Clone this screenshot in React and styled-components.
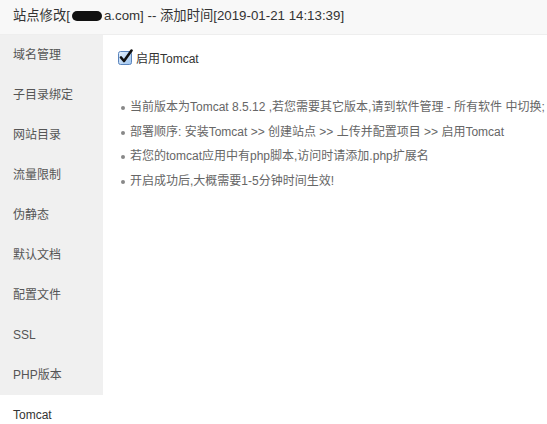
import React from "react";
import styled, { createGlobalStyle } from "styled-components";

const GlobalStyle = createGlobalStyle`
  html, body {
    margin: 0;
    padding: 0;
    background: #fff;
    font-family: "Liberation Sans", "Noto Sans CJK SC", sans-serif;
  }
`;

const Layer = styled.div`
  width: 547px;
  height: 424px;
  overflow: hidden;
  background: #fff;
`;

const Title = styled.div`
  height: 34px;
  line-height: 32px;
  padding-left: 13px;
  background: #f8f8f8;
  border-bottom: 1px solid #eee;
  font-size: 13.3px;
  color: #333;
  white-space: nowrap;
`;

const Redacted = styled.span`
  display: inline-block;
  width: 30px;
  height: 10px;
  margin: 0 2px 0 2px;
  background: #111;
  border-radius: 5px;
  vertical-align: -1px;
`;

const Body = styled.div`
  display: flex;
  height: 389px;
`;

const Side = styled.ul`
  list-style: none;
  margin: 0;
  padding: 0;
  width: 103px;
  flex-shrink: 0;
  background: #f0f0f0;
`;

const SideItem = styled.li`
  height: 40px;
  line-height: 40px;
  padding-left: 13px;
  font-size: 12px;
  color: ${({ $active }) => ($active ? "#333" : "#555")};
  background: ${({ $active }) => ($active ? "#fff" : "transparent")};
`;

const Content = styled.div`
  flex: 1;
  padding: 14px 0 0 15px;
  white-space: nowrap;
`;

const CheckRow = styled.label`
  display: flex;
  align-items: center;
  gap: 3px;
  height: 16px;
  font-size: 12px;
  color: #333;
`;

const List = styled.ul`
  margin: 30px 0 0 0;
  padding: 0 0 0 12px;
  list-style: none;
`;

const ListItem = styled.li`
  position: relative;
  height: 24.5px;
  line-height: 24.5px;
  font-size: 12px;
  color: #666;

  &::before {
    content: "";
    position: absolute;
    left: -9px;
    top: 11px;
    width: 4px;
    height: 4px;
    border-radius: 50%;
    background: #888;
  }
`;

const CheckIcon = () => (
  <svg width="15" height="16" viewBox="0 0 15 16">
    <defs>
      <linearGradient id="cb" x1="0" y1="0" x2="1" y2="1">
        <stop offset="0" stopColor="#e6f1fd" />
        <stop offset="1" stopColor="#9cc3ee" />
      </linearGradient>
    </defs>
    <rect x="0.5" y="2.5" width="13" height="13" rx="2" fill="url(#cb)" stroke="#5a84bd" />
    <path d="M3 8.5 L6 12 L13.5 1.5" fill="none" stroke="#111" strokeWidth="2.6" strokeLinecap="round" strokeLinejoin="round" />
  </svg>
);

const menu = [
  "域名管理",
  "子目录绑定",
  "网站目录",
  "流量限制",
  "伪静态",
  "默认文档",
  "配置文件",
  "SSL",
  "PHP版本",
  "Tomcat",
];

const tips = [
  "当前版本为Tomcat 8.5.12 ,若您需要其它版本,请到软件管理 - 所有软件 中切换;",
  "部署顺序: 安装Tomcat >> 创建站点 >> 上传并配置项目 >> 启用Tomcat",
  "若您的tomcat应用中有php脚本,访问时请添加.php扩展名",
  "开启成功后,大概需要1-5分钟时间生效!",
];

export default function App() {
  return (
    <>
      <GlobalStyle />
      <Layer>
        <Title>
          站点修改[<Redacted />a.com] -- 添加时间[2019-01-21 14:13:39]
        </Title>
        <Body>
          <Side>
            {menu.map((m) => (
              <SideItem key={m} $active={m === "Tomcat"}>
                {m}
              </SideItem>
            ))}
          </Side>
          <Content>
            <CheckRow>
              <CheckIcon />
              启用Tomcat
            </CheckRow>
            <List>
              {tips.map((t) => (
                <ListItem key={t}>{t}</ListItem>
              ))}
            </List>
          </Content>
        </Body>
      </Layer>
    </>
  );
}
